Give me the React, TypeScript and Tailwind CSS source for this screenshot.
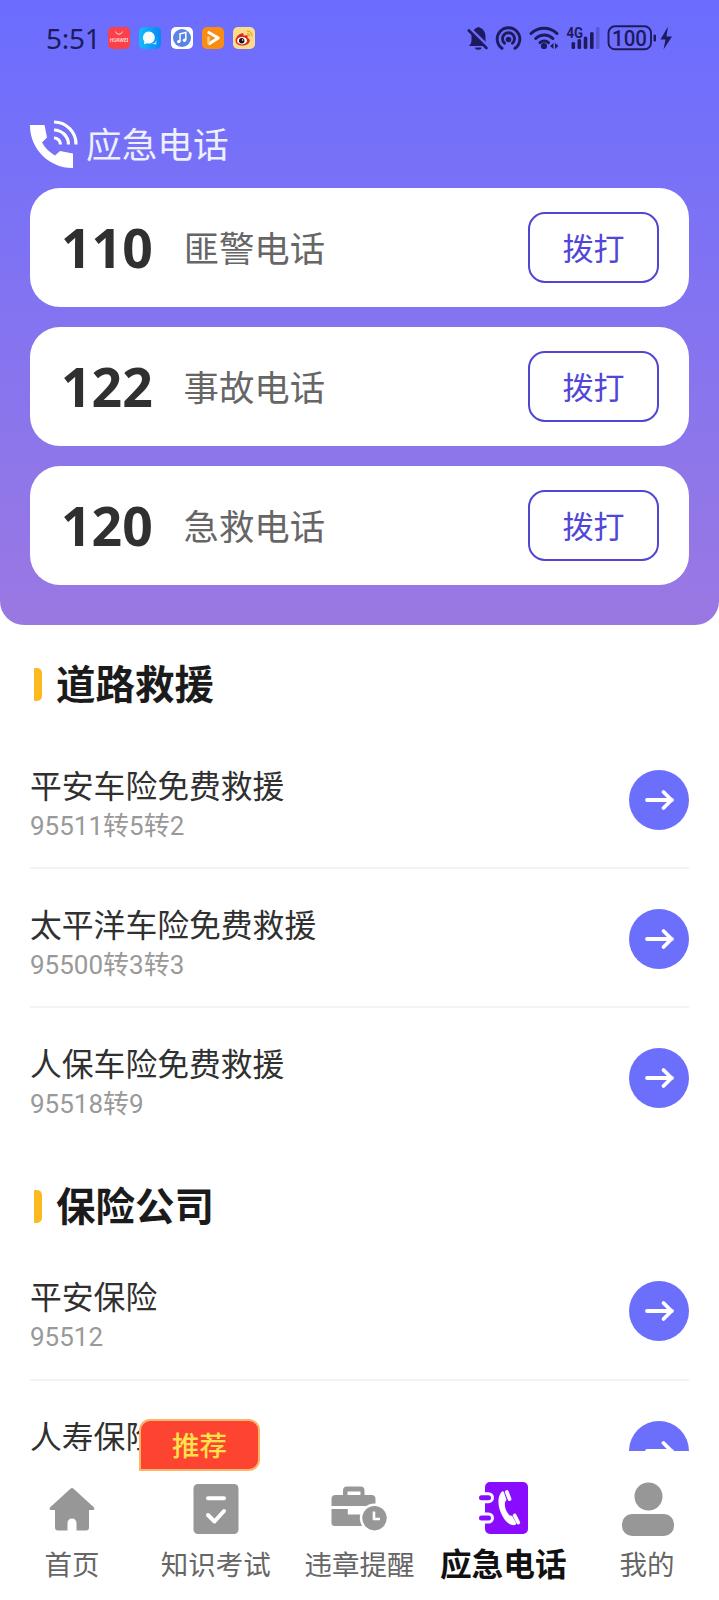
import React from "react";

const cjk = "font-['Noto_Sans_CJK_SC',sans-serif]";

function StatusBar() {
  return (
    <div className="flex h-[75px] items-center pl-[46px] text-[#1d1b5e]">
      <span className="w-[62px] font-['Noto_Sans',sans-serif] text-[28px] leading-[30px] tracking-[-0.3px]">5:51</span>
      <div className="flex gap-[9.300px]">
        <svg width="22" height="22" viewBox="0 0 22 22">
          <rect width="22" height="22" rx="5" fill="#fa4048" />
          <path d="M7.500 4.500a3.600 3.600 0 0 0 7 0" fill="none" stroke="#ffd9d9" strokeWidth="1" />
          <text x="11" y="15" textAnchor="middle" fontSize="4.600" fontWeight="700" fontFamily="Noto Sans" fill="#ffd9d9">HUAWEI</text>
        </svg>
        <svg width="22" height="22" viewBox="0 0 22 22">
          <defs>
            <linearGradient id="msg" x1="0" y1="0" x2="1" y2="0">
              <stop offset="0" stopColor="#12bdfb" />
              <stop offset="1" stopColor="#0a86f5" />
            </linearGradient>
          </defs>
          <rect width="22" height="22" rx="5" fill="url(#msg)" />
          <path d="M17.500 10a5 5 0 0 1-5 6.500l4.800 1.200Z" fill="#8fe0ff" />
          <path d="M10 4.500a6 6 0 1 1-2 11.700L5 17.300l.3-3A6 6 0 0 1 10 4.500Z" fill="#f4fcff" />
        </svg>
        <svg width="22" height="22" viewBox="0 0 22 22">
          <rect width="22" height="22" rx="5" fill="#fff" />
          <circle cx="11" cy="11" r="9" fill="#5b83e6" />
          <path d="M9 14.500V6.800l5.800-1.300v7.500" fill="none" stroke="#fff" strokeWidth="1.500" />
          <circle cx="7.700" cy="14.600" r="1.700" fill="#fff" />
          <circle cx="13.500" cy="13.200" r="1.700" fill="#fff" />
        </svg>
        <svg width="22" height="22" viewBox="0 0 22 22">
          <rect width="22" height="22" rx="5" fill="#fb8c12" />
          <path d="M6.800 5.500L16.300 11L7.500 16.500" fill="none" stroke="#fff" strokeWidth="3" strokeLinejoin="round" strokeLinecap="round" />
          <path d="M6.500 10.500v5.500" stroke="#ffd08a" strokeWidth="2.500" strokeLinecap="round" />
        </svg>
        <svg width="22" height="22" viewBox="0 0 22 22">
          <rect width="22" height="22" rx="5" fill="#fbdc8c" />
          <path d="M2.500 13.500c0-3.500 4.500-7.500 7-7.200 1.300.2 1.300 1.500 1 2.500 2-.9 4.300-.9 4.300.8 0 .6-.2 1-.3 1.400 1.500.4 2.300 1.300 2.300 2.500 0 3-3.500 5-7.500 5s-6.800-2-6.800-5Z" fill="#e0261c" />
          <ellipse cx="9" cy="13.700" rx="5" ry="3.700" fill="#fff" />
          <circle cx="8.700" cy="13.800" r="2.700" fill="#17120f" />
          <circle cx="9.600" cy="13" r=".8" fill="#fff" />
          <path d="M14 4a5 5 0 0 1 5 5.500M14 6.800a2.500 2.500 0 0 1 2.300 2.600" fill="none" stroke="#f2a32a" strokeWidth="1.400" />
        </svg>
      </div>
      <svg className="ml-auto mr-[44px]" width="210" height="28" viewBox="465 23 210 28">
        <g fill="#1d1b5e">
          <path d="M469 45c1.500-1.500 2.500-3 2.500-6v-3.500c0-4.500 2.700-8 5.500-8.700a2 2 0 0 1 3 0c3 .7 5.500 4.200 5.500 8.700V39c0 3 1 4.500 2.500 6Z" />
          <path d="M475 46.500h6.500a3.250 2.200 0 0 1-6.500 0Z" />
        </g>
        <path d="M468.500 26.500L488 45.500" stroke="#6c6dfb" strokeWidth="3.500" />
        <path d="M468.800 29.500L486.500 47" stroke="#1d1b5e" strokeWidth="2.600" strokeLinecap="round" />
        <g fill="none" stroke="#1d1b5e" strokeWidth="2.900" strokeLinecap="round">
          <path d="M502 47.300A11.300 11.300 0 1 1 515 47.300" />
          <path d="M504.500 42.200A6 6 0 1 1 512.500 42.200" />
        </g>
        <g fill="none" stroke="#1d1b5e" strokeWidth="3" strokeLinecap="round">
          <path d="M531 32.500a18.500 18.500 0 0 1 26 0M535.700 37.500a12.300 12.300 0 0 1 17.200 0M540 41.700a6.500 6.500 0 0 1 8.500 0" />
        </g>
        <g fill="#1d1b5e">
          <circle cx="508.500" cy="38.500" r="2.800" />
          <circle cx="544" cy="45" r="3.100" />
          <path d="M550 45l3.500-3v6ZM558.500 45l-3.500-3v6Z" />
          <rect x="571.500" y="41" width="3.600" height="7" rx="1.500" />
          <rect x="577.500" y="38" width="3.600" height="10" rx="1.500" />
          <rect x="583.700" y="35.500" width="3.600" height="12.500" rx="1.500" />
          <rect x="590" y="31" width="3.600" height="17" rx="1.500" />
          <text x="566.500" y="36.500" fontSize="14.500" fontWeight="700" textLength="16.500" lengthAdjust="spacingAndGlyphs" fontFamily="Roboto">4G</text>
          <rect x="596" y="26" width="3.500" height="22" rx="1" fillOpacity=".25" />
          <rect x="653.500" y="33.500" width="2.500" height="7" rx="1.200" />
          <path d="M668 25.500L660.500 38.500h5L663.500 48.500L672 35.500h-5.500Z" />
          <text x="629.500" y="44.700" textAnchor="middle" fontSize="22" textLength="35" lengthAdjust="spacingAndGlyphs" fontFamily="Roboto" fontWeight="500">100</text>
        </g>
        <rect x="608.500" y="25.300" width="42.500" height="23" rx="6.500" fill="none" stroke="#1d1b5e" strokeWidth="1.900" />
      </svg>
    </div>
  );
}

function CallCard({ number, label }: { number: string; label: string }) {
  return (
    <div className="flex h-[119px] items-center rounded-[30px] bg-white pl-[31px] pr-[30px]">
      <span className="w-[122.500px] font-['Noto_Sans',sans-serif] text-[53.500px] font-bold leading-[60px] text-[#303030]">{number}</span>
      <span className="pb-[2px] text-[35.400px] leading-[50px] text-[#666]">{label}</span>
      <button className="ml-auto h-[71px] w-[131px] rounded-[17px] border-2 border-[#5046d2] pb-[3px] text-[31px] leading-none text-[#5046d8]">拨打</button>
    </div>
  );
}

function SectionTitle({ children, className }: { children: string; className: string }) {
  return (
    <div className={`flex items-center pl-[4px] ${className}`}>
      <span className="mr-[14px] h-[33px] w-[8px] rounded-l-[1px] rounded-r-[5px] bg-[#fcb920]" />
      <h2 className="pb-[5px] text-[39.500px] font-bold leading-[50px] text-[#1b1b1b]">{children}</h2>
    </div>
  );
}

function Row({ title, sub, last }: { title: string; sub?: string; last?: boolean }) {
  return (
    <div className={`flex h-[139.300px] items-start justify-between pt-[40px] ${last ? "" : "border-b-2 border-[#f3f3f3]"}`}>
      <div>
        <div className="mt-[-6px] text-[31.800px] leading-[40px] text-[#303030]">{title}</div>
        {sub && <div className="pt-[2px] font-['Roboto','Noto_Sans_CJK_SC',sans-serif] text-[26px] leading-[40px] text-[#999]">{sub}</div>}
      </div>
      <svg width="60" height="60" viewBox="0 0 60 60">
        <circle cx="30" cy="30" r="30" fill="#6c6ffc" />
        <path d="M18 30h25M34.500 22l8 8l-8 8" fill="none" stroke="#fff" strokeWidth="3.800" strokeLinecap="round" strokeLinejoin="round" />
      </svg>
    </div>
  );
}

function Tab({ label, active, children }: { label: string; active?: boolean; children: React.ReactNode }) {
  return (
    <div className="flex flex-1 flex-col items-center pt-[25px]">
      <svg width="64" height="64" viewBox="0 0 64 64">{children}</svg>
      <span className={active ? "whitespace-nowrap text-[31.700px] font-bold leading-[45px] text-[#111]" : "whitespace-nowrap text-[27.500px] leading-[47px] text-[#666]"}>{label}</span>
    </div>
  );
}

export default function App() {
  return (
    <div className={`relative flex h-[1600px] w-[719px] flex-col overflow-hidden bg-white ${cjk}`}>
      <header className="h-[625px] shrink-0 rounded-b-[24px] bg-linear-to-b from-[#6b6dff] to-[#9a78e2]">
        <StatusBar />
        <div className="flex h-[113px] items-end px-[30px] pb-[19px]">
          <svg width="49" height="49" viewBox="0 0 49 49">
            <path d="M0 5h14.500l2.500 12.500l-5 5c3.500 6 8 10 13 13l5-4.500L43 33.500V48C20 48.500-.5 29 0 5Z" fill="#fff" />
            <path d="M24 2A22 22 0 0 1 46 24.500M24 10A14.500 14.500 0 0 1 38.500 24.500M24 18a6.500 6.500 0 0 1 6.500 6.500" fill="none" stroke="#fff" strokeWidth="3.200" />
          </svg>
          <h1 className="ml-[7px] pb-[3px] text-[35.700px] leading-[46px] text-[#eeefff]">应急电话</h1>
        </div>
        <div className="flex flex-col gap-[20px] px-[30px]">
          <CallCard number="110" label="匪警电话" />
          <CallCard number="122" label="事故电话" />
          <CallCard number="120" label="急救电话" />
        </div>
      </header>
      <main className="min-h-0 flex-1 overflow-hidden px-[30px]">
        <SectionTitle className="h-[104.500px] pt-[14px]">道路救援</SectionTitle>
        <Row title="平安车险免费救援" sub="95511转5转2" />
        <Row title="太平洋车险免费救援" sub="95500转3转3" />
        <Row title="人保车险免费救援" sub="95518转9" last />
        <SectionTitle className="h-[94px] pt-[25px]">保险公司</SectionTitle>
        <Row title="平安保险" sub="95512" />
        <Row title="人寿保险" />
      </main>
      <nav className="relative flex h-[149px] shrink-0 bg-white">
        <div className="absolute left-[139px] top-[-32px] flex h-[52px] w-[121px] items-center justify-center rounded-[11px] rounded-bl-none border-2 border-[#fbb56a] bg-[#fd4430] text-[27.500px] font-medium text-[#ffe14d]">推荐</div>
        <Tab label="首页">
          <path d="M30.700 12.500a2 2 0 0 1 2.600 0L53.500 31c1.500 1.500 1 3-1 3H49v17.500a3 3 0 0 1-3 3h-9.500V47a4.500 4.500 0 0 0-9 0v7.500H18a3 3 0 0 1-3-3V34h-3.500c-2 0-2.500-1.500-1-3Z" fill="#979797" />
        </Tab>
        <Tab label="知识考试">
          <rect x="9.500" y="8" width="45" height="50" rx="4.500" fill="#979797" />
          <path d="M24 22.300h16M24 39l6.500 6.500L40 35" fill="none" stroke="#fff" strokeWidth="4" strokeLinecap="round" strokeLinejoin="round" />
        </Tab>
        <Tab label="违章提醒">
          <path d="M16 19v-4.500a4 4 0 0 1 4-4h13.500a4 4 0 0 1 4 4V19" fill="#979797" />
          <path d="M20.500 15.500h13v3.500h-13Z" fill="#fff" />
          <path d="M8.500 19h36a4 4 0 0 1 4 4v7h-44v-7a4 4 0 0 1 4-4ZM4.500 33h16.300v5.500H40V50H7.500a3 3 0 0 1-3-3Z" fill="#979797" />
          <circle cx="47.500" cy="42.200" r="14.700" fill="#fff" />
          <circle cx="47.500" cy="42.200" r="12.200" fill="#979797" />
          <path d="M47 35.500v7.500h6" fill="none" stroke="#fff" strokeWidth="2.600" />
        </Tab>
        <Tab label="应急电话" active>
          <rect x="14" y="6" width="43" height="52" rx="5" fill="#8a0cff" />
          <path d="M12 21.700h5.500M12 42h5.500" stroke="#fff" strokeWidth="11" strokeLinecap="round" />
          <path d="M10.500 21.700h7M10.500 42h7" stroke="#8a0cff" strokeWidth="5" strokeLinecap="round" />
          <path d="M31 15.500c.8-.5 1.600-.2 2 .8l2.300 7c.2 1-.2 1.500-1 2.200-1.500 5 1.200 11 4.500 14 1.200-.2 2-.1 2.600.8l3.600 6.500c.5 1-.1 1.800-1.200 2.200-10.500 2.500-22.500-24-12.800-33.500Z" fill="#fff" />
          <path d="M35.800 16l2.700 7M43.700 39.500l3.500 7" stroke="#fff" strokeWidth="3.800" strokeLinecap="round" />
        </Tab>
        <Tab label="我的">
          <circle cx="33.500" cy="20.500" r="14" fill="#979797" />
          <rect x="7" y="38" width="52" height="22" rx="10" fill="#979797" />
        </Tab>
      </nav>
    </div>
  );
}
